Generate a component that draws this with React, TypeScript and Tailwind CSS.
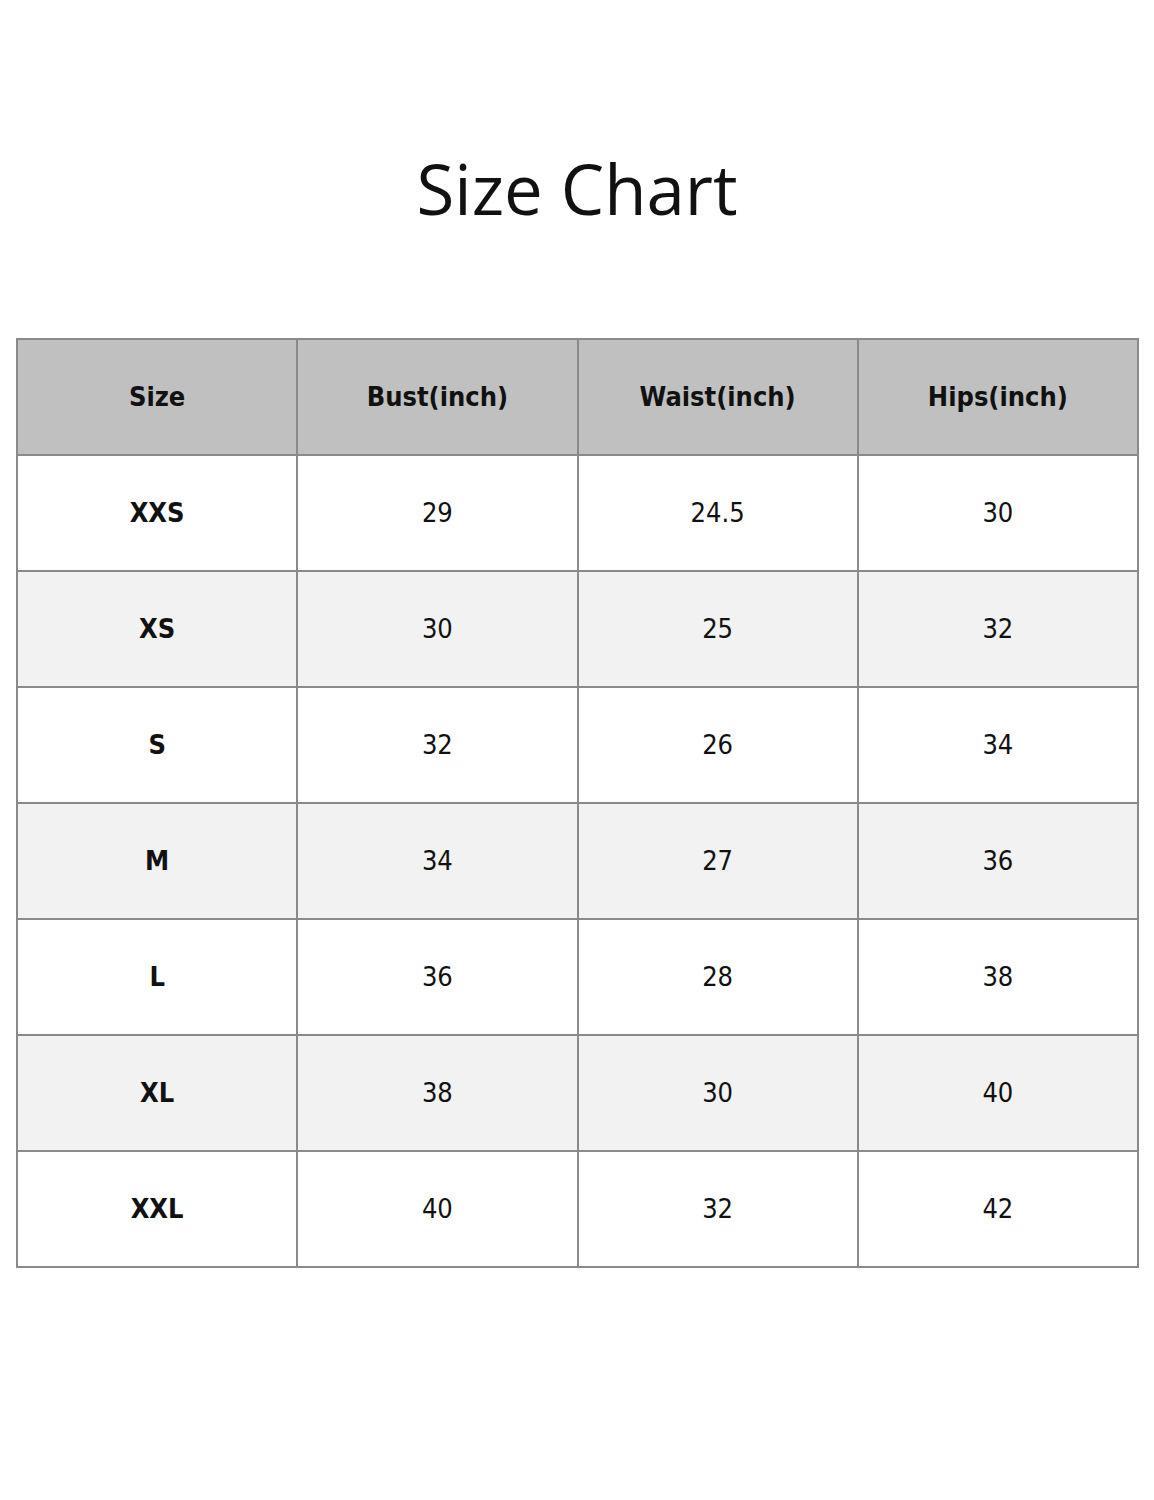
const rows = [
  ['XXS', '29', '24.5', '30'],
  ['XS', '30', '25', '32'],
  ['S', '32', '26', '34'],
  ['M', '34', '27', '36'],
  ['L', '36', '28', '38'],
  ['XL', '38', '30', '40'],
  ['XXL', '40', '32', '42'],
];

const headers = ['Size', 'Bust(inch)', 'Waist(inch)', 'Hips(inch)'];

export default function App() {
  return (
    <div className="min-h-[1500px] bg-white px-4 pt-[146px]">
      <h1
        className="text-center text-[69px] leading-[84px] text-[#111]"
        style={{ fontFamily: '"Open Sans", "Noto Sans", sans-serif' }}
      >
        Size Chart
      </h1>

      <table
        className="mt-[108px] w-[1123px] table-fixed border-collapse text-[27px] text-[#111]"
        style={{ fontFamily: '"DejaVu Sans Condensed", "DejaVu Sans", sans-serif' }}
      >
        <thead>
          <tr className="h-[116px] bg-[#c0c0c0]">
            {headers.map((h) => (
              <th key={h} className="border-2 border-[#8a8a8a] text-center font-bold">
                {h}
              </th>
            ))}
          </tr>
        </thead>
        <tbody>
          {rows.map((r, i) => (
            <tr key={r[0]} className={`h-[116px] ${i % 2 === 1 ? 'bg-[#f2f2f2]' : 'bg-white'}`}>
              {r.map((c, j) => (
                <td
                  key={j}
                  className={`border-2 border-[#8a8a8a] text-center ${j === 0 ? 'font-bold' : 'font-normal'}`}
                >
                  {c}
                </td>
              ))}
            </tr>
          ))}
        </tbody>
      </table>
    </div>
  );
}
